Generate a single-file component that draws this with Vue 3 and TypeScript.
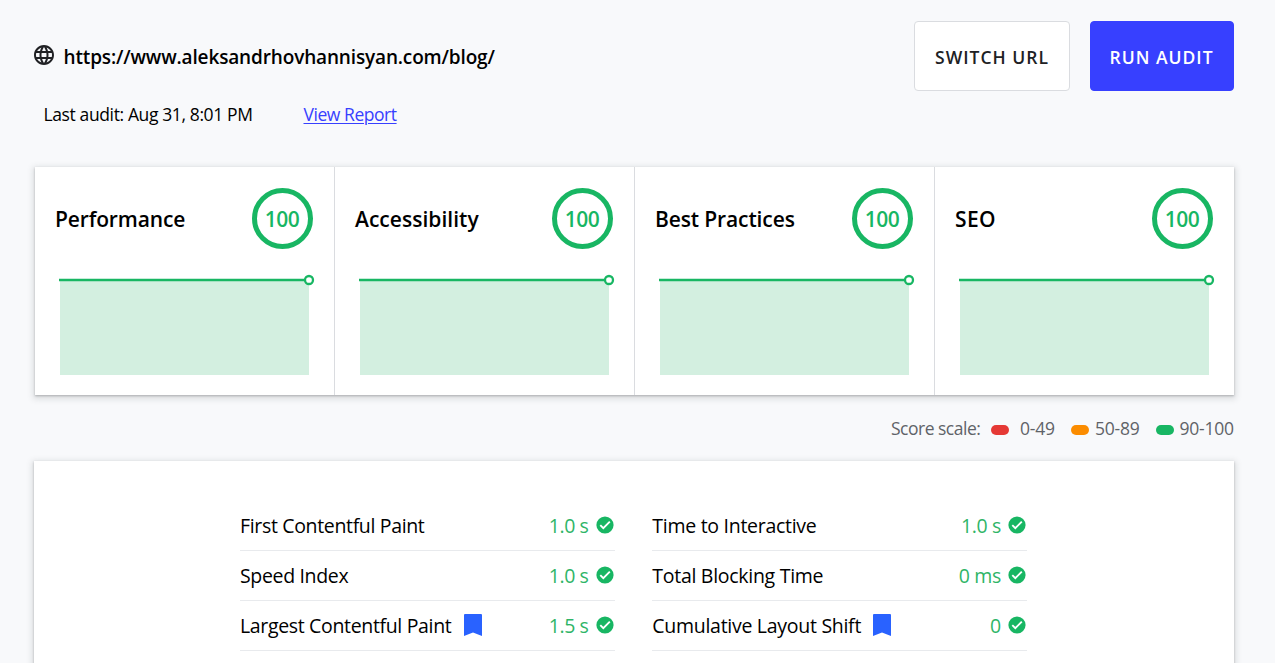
<script setup lang="ts">
interface Category { name: string; key: string; score: number }
interface Metric { name: string; key: string; value: string; vital?: boolean }

const categories: Category[] = [
  { name: 'Performance', key: 'perf', score: 100 },
  { name: 'Accessibility', key: 'a11y', score: 100 },
  { name: 'Best Practices', key: 'best', score: 100 },
  { name: 'SEO', key: 'seo', score: 100 },
]

const scale = [
  { key: 'poor', range: '0-49' },
  { key: 'average', range: '50-89' },
  { key: 'good', range: '90-100' },
]

const columns: Metric[][] = [
  [
    { name: 'First Contentful Paint', key: 'fcp', value: '1.0 s' },
    { name: 'Speed Index', key: 'si', value: '1.0 s' },
    { name: 'Largest Contentful Paint', key: 'lcp', value: '1.5 s', vital: true },
  ],
  [
    { name: 'Time to Interactive', key: 'tti', value: '1.0 s' },
    { name: 'Total Blocking Time', key: 'tbt', value: '0 ms' },
    { name: 'Cumulative Layout Shift', key: 'cls', value: '0', vital: true },
  ],
]
</script>

<template>
  <main class="page">
    <header class="top">
      <div class="site">
        <svg class="globe" viewBox="0 0 24 24" width="24" height="24">
          <path fill="#202124" d="M11.99 2C6.47 2 2 6.48 2 12s4.47 10 9.99 10C17.52 22 22 17.52 22 12S17.52 2 11.99 2zm6.93 6h-2.95a15.65 15.65 0 0 0-1.38-3.56A8.03 8.03 0 0 1 18.92 8zM12 4.04c.83 1.2 1.48 2.53 1.91 3.96h-3.82c.43-1.43 1.08-2.76 1.91-3.96zM4.26 14C4.1 13.36 4 12.69 4 12s.1-1.36.26-2h3.38c-.08.66-.14 1.32-.14 2s.06 1.34.14 2H4.26zm.82 2h2.95c.32 1.25.78 2.45 1.38 3.56A7.99 7.99 0 0 1 5.08 16zm2.95-8H5.08a7.99 7.99 0 0 1 4.33-3.56A15.65 15.65 0 0 0 8.03 8zM12 19.96c-.83-1.2-1.48-2.53-1.91-3.96h3.82c-.43 1.43-1.08 2.76-1.91 3.96zM14.34 14H9.66c-.09-.66-.16-1.32-.16-2s.07-1.35.16-2h4.68c.09.65.16 1.32.16 2s-.07 1.34-.16 2zm.25 5.56c.6-1.11 1.06-2.31 1.38-3.56h2.95a8.03 8.03 0 0 1-4.33 3.56zM16.36 14c.08-.66.14-1.32.14-2s-.06-1.34-.14-2h3.38c.16.64.26 1.31.26 2s-.1 1.36-.26 2h-3.38z" />
        </svg>
        <span class="url">https://www.aleksandrhovhannisyan.com/blog/</span>
      </div>
      <div class="actions">
        <button class="btn switch">SWITCH URL</button>
        <button class="btn run">RUN AUDIT</button>
      </div>
    </header>

    <div class="meta">
      <span class="last">Last audit: Aug 31, 8:01 PM</span>
      <a class="report" href="#">View Report</a>
    </div>

    <section class="card scores">
      <article v-for="c in categories" :key="c.key" class="score">
        <div class="score-head">
          <h2 :class="['name', c.key]">{{ c.name }}</h2>
          <div class="ring"><span>{{ c.score }}</span></div>
        </div>
        <svg class="chart" viewBox="0 0 260 104" width="260" height="104">
          <rect x="5" y="8" width="249" height="95" fill="#d3efe0" />
          <path d="M4 8H250" stroke="#18b663" stroke-width="2.3" />
          <circle cx="254" cy="8" r="4" fill="#fff" stroke="#18b663" stroke-width="2.3" />
        </svg>
      </article>
    </section>

    <div class="legend">
      <span class="legend-title">Score scale:</span>
      <span v-for="s in scale" :key="s.key" :class="['entry', s.key]">
        <i class="pill"></i><span class="range">{{ s.range }}</span>
      </span>
    </div>

    <section class="card metrics">
      <div v-for="(col, i) in columns" :key="i" class="column">
        <div v-for="m in col" :key="m.key" class="row">
          <span :class="['metric', m.key]">{{ m.name }}</span>
          <svg v-if="m.vital" class="bookmark" viewBox="0 0 18 22" width="18" height="22">
            <path fill="#2962ff" d="M1 0H17Q18 0 18 1V22L9 18.6L0 22V1Q0 0 1 0Z" />
          </svg>
          <span class="value">{{ m.value }}</span>
          <svg class="check" viewBox="0 0 18 18" width="18" height="18">
            <circle cx="9" cy="9" r="8.6" fill="#18b663" />
            <path d="M4.3 9.2L7.3 12.2L13.8 5.7" fill="none" stroke="#fff" stroke-width="1.9" />
          </svg>
        </div>
      </div>
    </section>
  </main>
</template>

<style>
html, body { background: #f8f9fb; overflow: hidden; }
</style>

<style scoped>
.page {
  box-sizing: border-box;
  width: 1275px;
  height: 663px;
  padding: 21px 41px 0 34px;
  overflow: hidden;
  font-family: "Open Sans", "Noto Sans", sans-serif;
  color: #000;
  white-space: nowrap;
}
.top { display: flex; justify-content: space-between; height: 70px; }
.site { display: flex; align-items: center; height: 70px; }
.globe { margin: -2px 7.5px 0 -2px; }
.url { font-size: 19px; font-weight: 600; line-height: 30px; letter-spacing: -0.15px; padding-top: 2px; }
.actions { display: flex; gap: 20px; }
.btn {
  box-sizing: border-box;
  height: 70px;
  padding: 1px 0 0;
  border: 1px solid #dadce0;
  border-radius: 4px;
  font-family: inherit;
  font-size: 17.5px;
  font-weight: 600;
  letter-spacing: 1px;
}
.switch { width: 156px; background: #fff; color: #202124; }
.run { width: 144px; padding-right: 1px; background: #3740ff; border-color: #3740ff; color: #fff; }
.meta { display: flex; height: 75px; padding: 10px 0 0 9.5px; box-sizing: border-box; font-size: 17.5px; line-height: 26px; }
.last { width: 260px; letter-spacing: -0.38px; }
.report { color: #3740ff; letter-spacing: -0.45px; text-underline-offset: 2px; text-decoration-thickness: 1px; }
.card {
  background: #fff;
  box-shadow: 0 1px 2px rgba(60, 64, 67, 0.3), 0 2px 6px 2px rgba(60, 64, 67, 0.15);
}
.scores { display: flex; margin: 1px 0 0 1px; height: 228px; }
.score { box-sizing: border-box; width: 300px; padding: 21px 20px 0; border-right: 1px solid #dadce0; }
.score:last-child { border-right: 0; width: 299px; }
.score-head { display: flex; justify-content: space-between; width: 258px; height: 61px; }
.name { margin: 0; font-size: 21px; font-weight: 600; line-height: 62px; }
.perf { letter-spacing: -0.13px; }
.a11y { letter-spacing: 0.03px; }
.best { letter-spacing: -0.12px; }
.seo { letter-spacing: 0.4px; }
.ring {
  box-sizing: border-box;
  width: 61px;
  height: 61px;
  padding-right: 1px;
  border: 5px solid #18b663;
  border-radius: 50%;
  color: #18b663;
  font-size: 21px;
  font-weight: 600;
  line-height: 52px;
  letter-spacing: -0.5px;
  text-align: center;
}
.chart { display: block; margin-top: 23px; }
.legend { display: flex; justify-content: flex-end; align-items: center; height: 66px; box-sizing: border-box; color: #5f6368; font-size: 17.5px; letter-spacing: -0.25px; }
.legend-title { width: 100px; letter-spacing: -0.5px; }
.entry { display: flex; align-items: center; }
.pill { width: 18px; height: 10px; border-radius: 5px; margin-top: 4px; }
.poor { width: 80px; }
.average { width: 85px; }
.good { width: 78px; }
.poor .pill { background: #e53935; margin-right: 11px; }
.average .pill { background: #fb8c00; margin-right: 6px; }
.good .pill { background: #18b663; margin-right: 5.5px; }
.metrics { display: flex; gap: 37.3px; box-sizing: border-box; width: 1200px; height: 240px; padding: 40px 0 0 206px; }
.column { width: 375px; }
.row { display: flex; align-items: center; box-sizing: border-box; height: 50px; border-bottom: 1px solid #e8eaed; font-size: 19.5px; }
.metric { letter-spacing: -0.34px; }
.tti, .tbt, .cls { letter-spacing: -0.28px; }
.bookmark { margin-left: 12.4px; margin-top: -1px; }
.value { margin-left: auto; color: #2fb567; letter-spacing: -0.4px; }
.check { margin: -1px 1px 0 7.5px; }
</style>
